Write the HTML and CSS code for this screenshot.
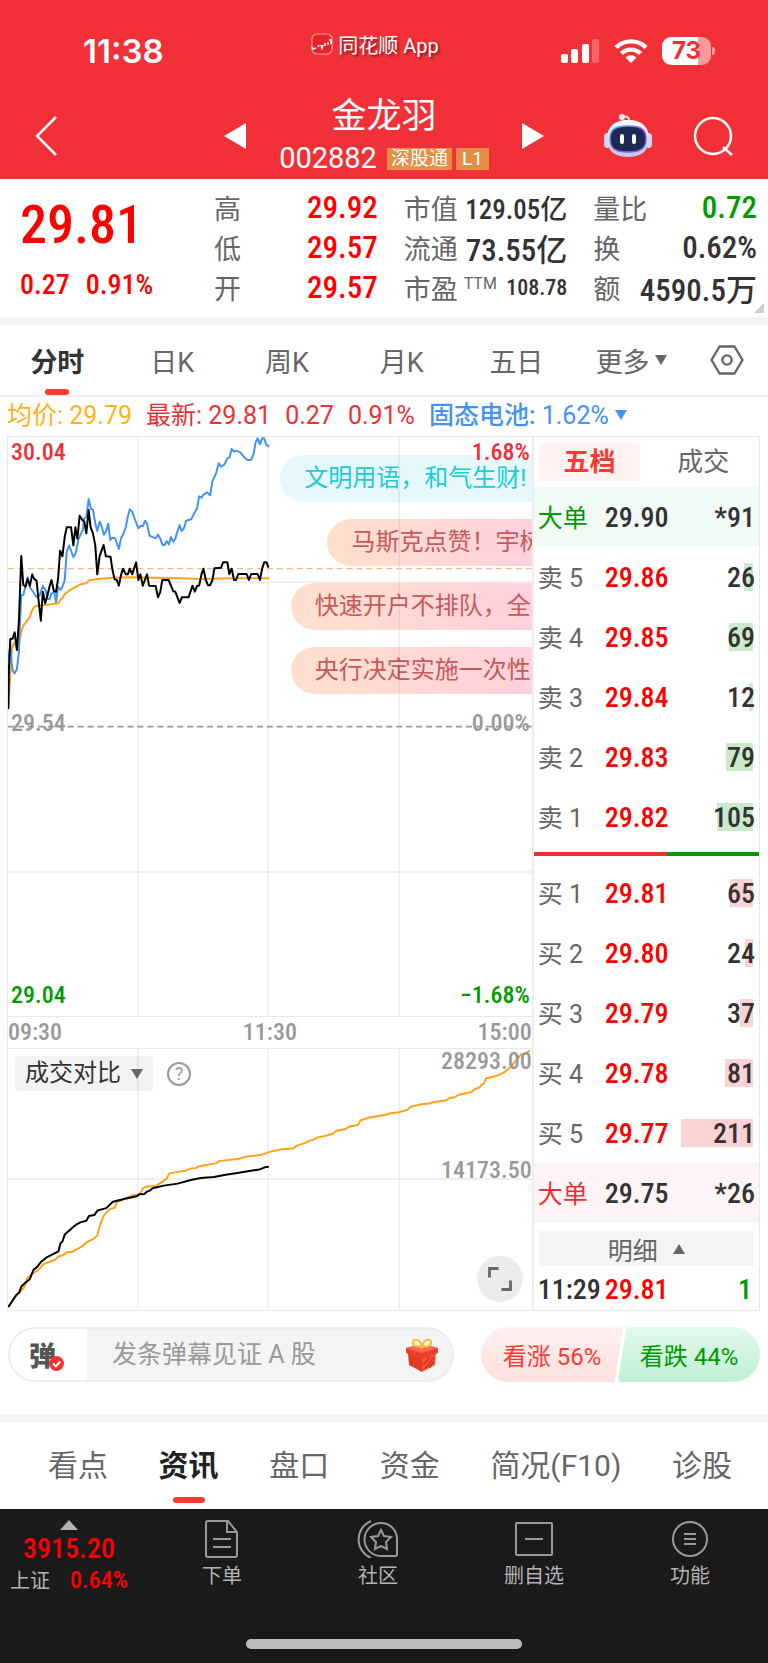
FILE: index.html
```
<!DOCTYPE html>
<html lang="zh-CN">
  <head>
    <meta charset="UTF-8" />
    <meta name="viewport" content="width=device-width, initial-scale=1.0" />
    <title>金龙羽 002882</title>
    <link rel="stylesheet" href="styles.css">
  </head>
  <body>
    <header class="header">
      <div class="status-bar">
        <span class="time">11:38</span>
        <span class="app-name">
          <svg width="22" height="22" viewBox="0 0 22 22">
            <rect x="1" y="1" width="20" height="20" rx="5" fill="#e8232b" stroke="#f99" stroke-width="1.2" />
            <path d="M1 14l1 2 3-1M7 14l1-2M10 12l1 3 1-3M14 13v-3M17 9v3M18 7h2v4" fill="none" stroke="#fff" stroke-width="1.6" />
          </svg>
          同花顺 App
        </span>
        <span class="status-icons">
          <svg width="39" height="26" viewBox="0 0 39 26">
            <g fill="#fff">
              <rect x="0" y="16" width="7" height="9" rx="2" />
              <rect x="10" y="11" width="7" height="14" rx="2" />
              <rect x="21" y="6" width="7" height="19" rx="2" />
              <rect x="31" y="1" width="7" height="24" rx="2" opacity=".25" />
            </g>
          </svg>
          <svg width="34" height="26" viewBox="0 0 34 26">
            <g fill="none" stroke="#fff" stroke-width="4.4">
              <path d="M2 9.500a21.500 21.500 0 0 1 30 0" />
              <path d="M7.500 15.500a13.500 13.500 0 0 1 19 0" />
            </g>
            <path d="M17 25l-5.500-5.600a7.800 7.800 0 0 1 11 0z" fill="#fff" />
          </svg>
          <span class="battery">73</span>
        </span>
      </div>

      <nav class="title-bar">
        <button class="icon-button" aria-label="返回">
          <svg width="24" height="40" viewBox="0 0 24 40">
            <path d="M21 1L2 20l19 19" fill="none" stroke="#fff" stroke-width="2.500" />
          </svg>
        </button>
        <div class="stock-switch">
          <button class="icon-button" aria-label="上一只">
            <svg width="22" height="26" viewBox="0 0 22 26"><path d="M22 0v26L0 13z" fill="#fff" /></svg>
          </button>
          <div class="stock-title">
            <h1>金龙羽</h1>
            <p>002882 <span class="tag">深股通</span><span class="tag">L1</span></p>
          </div>
          <button class="icon-button" aria-label="下一只">
            <svg width="22" height="26" viewBox="0 0 22 26"><path d="M0 0v26l22-13z" fill="#fff" /></svg>
          </button>
        </div>
        <div class="title-actions">
          <button class="icon-button" aria-label="智能助手">
            <svg width="48" height="46" viewBox="0 0 48 46">
              <defs>
                <linearGradient id="shell" x1="0" y1="0" x2="0" y2="1">
                  <stop offset="0" stop-color="#fff" />
                  <stop offset="1" stop-color="#c3c6e6" />
                </linearGradient>
                <linearGradient id="rim" x1="0" y1="0" x2="1" y2="1">
                  <stop offset="0" stop-color="#45c8e8" />
                  <stop offset=".5" stop-color="#a04be8" />
                  <stop offset="1" stop-color="#5a6cf0" />
                </linearGradient>
              </defs>
              <path d="M18 4q8-2 7 5" fill="none" stroke="#dcdcf2" stroke-width="2" />
              <circle cx="18" cy="4" r="3" fill="#e9e9f8" />
              <rect x="0" y="20" width="7" height="15" rx="3.500" fill="#cfd2ee" />
              <rect x="41" y="20" width="7" height="15" rx="3.500" fill="#cfd2ee" />
              <path d="M24 7c15 0 21 8 21 19S38 44 24 44 3 37 3 26 9 7 24 7z" fill="url(#shell)" />
              <path d="M24 13c14 0 18 4 18 13s-5 13-18 13S6 35 6 26s4-13 18-13z" fill="#1d2950" stroke="url(#rim)" stroke-width="1.500" />
              <rect x="16" y="21" width="4" height="10" rx="2" fill="#fff" />
              <rect x="28" y="21" width="4" height="10" rx="2" fill="#fff" />
            </svg>
          </button>
          <button class="icon-button" aria-label="搜索">
            <svg width="40" height="40" viewBox="0 0 40 40">
              <g fill="none" stroke="#fff" stroke-width="2.500">
                <circle cx="20" cy="20" r="18" />
                <path d="M30 31l9 8" />
              </g>
            </svg>
          </button>
        </div>
      </nav>
    </header>

    <section class="quote">
      <div class="quote-price">
        <div class="price">29.81</div>
        <div class="change"><span>0.27</span><span>0.91%</span></div>
      </div>
      <dl>
        <div><dt>高</dt><dd class="up">29.92</dd></div>
        <div><dt>低</dt><dd class="up">29.57</dd></div>
        <div><dt>开</dt><dd class="up">29.57</dd></div>
      </dl>
      <dl>
        <div><dt>市值</dt><dd class="medium">129.05亿</dd></div>
        <div><dt>流通</dt><dd>73.55亿</dd></div>
        <div><dt>市盈<sup>TTM</sup></dt><dd class="small">108.78</dd></div>
      </dl>
      <dl>
        <div><dt>量比</dt><dd class="down">0.72</dd></div>
        <div><dt>换</dt><dd>0.62%</dd></div>
        <div><dt>额</dt><dd>4590.5万</dd></div>
      </dl>
      <span class="corner"></span>
    </section>

    <nav class="period-tabs">
      <button class="active">分时</button>
      <button>日K</button>
      <button>周K</button>
      <button>月K</button>
      <button>五日</button>
      <button>更多<span class="caret"></span></button>
      <button aria-label="设置">
        <svg width="34" height="30" viewBox="0 0 34 30">
          <g fill="none" stroke="#666" stroke-width="2.400">
            <path d="M9.500 1.500h15L32.500 15l-8 13.500h-15L1.500 15z" stroke-linejoin="round" />
            <circle cx="17" cy="15" r="4.600" />
          </g>
        </svg>
      </button>
    </nav>

    <div class="info-line">
      <span class="avg">均价: 29.79</span>
      <span class="latest">最新: 29.81</span>
      <span class="latest">0.27</span>
      <span class="latest">0.91%</span>
      <button class="sector"><b>固态电池:</b> 1.62% <span class="caret"></span></button>
    </div>

    <main class="board">
      <div class="charts">
        <div class="price-chart">
          <div class="barrage">
            <span class="notice">文明用语，和气生财!</span>
            <span class="msg-a">马斯克点赞！宇树</span>
            <span class="msg-b">快速开户不排队，全流程</span>
            <span class="msg-b">央行决定实施一次性信用</span>
          </div>
          <svg viewBox="0 0 1578 1740" preserveAspectRatio="none">
            <g transform="translate(-24 -51)" fill="none" stroke-linejoin="round">
              <path d="M415 51V1791M808 51V1791M1203 51V1791M24 486H1602M24 1356H1602" stroke="#000" stroke-opacity=".08" stroke-width="4" />
              <path d="M24 446H1602" stroke="#e3bf8c" stroke-width="4" stroke-dasharray="18 12" />
              <path d="M24 920H1602" stroke="#999" stroke-width="5" stroke-dasharray="18 12" />
              <path stroke="#ffa31a" stroke-width="6" d="M25 865L30 780 36 685 42 668 50 680 58 670 63 640 70 617 80 604 90 590 96 572 103 561 112 557 130 556 155 553 176 550 183 538 188 535 195 522 210 511 225 502 243 493 260 490 268 481 295 477 340 473 400 472 460 473 530 474 600 477 700 475 811 475" />
              <path stroke="#4493f0" stroke-width="6" d="M25 720L31 675 34 720 38 752 44 760 51 747 57 695 60 610 64 525 70 525 77 498 83 472 90 502 98 513 110 531 119 527 129 498 138 512 142 535 149 538 155 520 164 518 169 547 175 500 182 510 188 500 195 480 201 395 208 377 214 392 221 411 228 400 236 360 243 342 250 330 253 297 260 290 267 237 274 267 280 269 287 310 293 333 300 305 306 318 313 344 319 335 326 311 332 360 338 353 347 355 358 387 365 353 372 341 379 321 385 290 391 268 398 275 406 297 417 325 424 317 431 318 437 302 443 311 450 346 456 350 469 355 476 344 483 356 489 374 496 375 502 363 509 373 515 351 522 365 528 357 535 333 541 315 547 333 554 325 561 302 576 298 586 278 594 264 600 229 607 233 613 224 624 217 633 226 640 184 652 157 659 130 666 140 676 134 685 115 691 113 698 87 705 95 711 92 724 97 737 113 746 120 757 119 764 102 770 68 776 55 783 73 790 55 796 55 802 74 811 80" />
              <path stroke="#000" stroke-width="6" d="M25 867L27 740 31 657 38 656 44 637 51 690 57 600 64 408 70 495 77 500 83 477 90 497 97 463 103 477 110 482 116 540 123 602 129 515 136 550 142 530 149 500 155 480 162 513 169 515 175 475 181 392 188 409 195 350 201 322 214 322 221 376 227 322 233 356 240 287 248 300 254 305 260 340 267 270 273 322 280 340 287 376 293 463 300 409 306 392 312 375 319 409 333 410 338 445 345 478 352 480 358 497 365 463 371 446 379 463 385 463 391 446 398 463 404 445 410 427 417 480 423 463 430 497 443 463 449 497 469 498 476 532 483 515 489 480 508 480 515 497 522 514 528 515 541 549 548 532 568 532 580 497 587 515 594 497 600 497 607 463 613 446 620 480 627 496 633 496 640 480 646 445 666 443 672 427 685 427 691 462 698 446 705 480 711 480 718 462 743 462 750 480 757 462 776 462 783 480 790 445 796 427 803 427 809 443" />
            </g>
          </svg>
          <span class="label top-left up-text">30.04</span>
          <span class="label top-right up-text">1.68%</span>
          <span class="label mid-left">29.54</span>
          <span class="label mid-right">0.00%</span>
          <span class="label bottom-left down">29.04</span>
          <span class="label bottom-right down">−1.68%</span>
        </div>
        <div class="time-axis"><span>09:30</span><span>11:30</span><span>15:00</span></div>
        <div class="volume-chart">
          <svg viewBox="0 0 1578 786" preserveAspectRatio="none">
            <g transform="translate(-24 -265)" fill="none" stroke-linejoin="round">
              <path d="M415 265V1051M808 265V1051M1203 265V1051M24 658H1602" stroke="#000" stroke-opacity=".08" stroke-width="4" />
              <path stroke="#ffa31a" stroke-width="6" d="M25 1045L45 1015 72 987 82 957 98 943 115 934 130 916 165 902 175 893 188 889 200 880 217 878 250 860 260 850 282 839 293 829 302 795 313 768 330 750 346 744 352 728 380 716 400 707 422 704 430 687 440 681 470 679 485 669 502 657 510 641 562 632 575 626 590 625 598 620 652 610 660 604 720 597 740 591 788 585 812 576 850 568 882 566 895 557 922 548 930 543 945 539 955 533 978 528 1003 521 1014 512 1042 507 1053 499 1078 495 1086 481 1110 473 1163 464 1173 460 1203 456 1227 449 1237 440 1270 432 1295 430 1303 426 1345 420 1355 413 1370 411 1380 404 1420 395 1432 386 1445 381 1450 374 1458 370 1464 354 1500 345 1520 335 1540 318 1560 292 1572 280 1582 280 1596 269" />
              <path stroke="#000" stroke-width="6" d="M25 1045L50 1007 57 1002 65 982 73 975 90 960 101 932 110 926 123 909 142 894 176 877 182 852 188 847 195 826 212 811 228 797 242 789 260 784 268 770 284 767 294 753 320 746 340 727 380 717 412 710 420 704 435 703 443 696 450 694 460 686 493 678 535 672 575 661 605 655 645 652 680 645 720 639 760 632 782 629 800 622 810 621" />
            </g>
          </svg>
          <div class="volume-tools">
            <button class="select-button">成交对比<span class="caret"></span></button>
            <button class="help" aria-label="说明">?</button>
          </div>
          <span class="label volume-max">28293.00</span>
          <span class="label volume-mid">14173.50</span>
          <button class="expand" aria-label="全屏">
            <svg width="24" height="24" viewBox="0 0 24 24">
              <path d="M1.500 10.500v-9h9M22.500 13.500v9h-9" fill="none" stroke="#666" stroke-width="2.800" />
            </svg>
          </button>
        </div>
      </div>

      <div class="order-book">
        <div class="book-tabs">
          <button class="active">五档</button>
          <button>成交</button>
        </div>
        <table>
          <tr class="big-sell"><th>大单</th><td>29.90</td><td>*91</td></tr>
          <tr class="sell"><th>卖 5</th><td>29.86</td><td><i style="width: 9px"></i>26</td></tr>
          <tr class="sell"><th>卖 4</th><td>29.85</td><td><i style="width: 24px"></i>69</td></tr>
          <tr class="sell"><th>卖 3</th><td>29.84</td><td><i style="width: 4px"></i>12</td></tr>
          <tr class="sell"><th>卖 2</th><td>29.83</td><td><i style="width: 27px"></i>79</td></tr>
          <tr class="sell"><th>卖 1</th><td>29.82</td><td><i style="width: 36px"></i>105</td></tr>
        </table>
        <div class="ratio"><span style="width: 59%"></span></div>
        <table>
          <tr class="buy"><th>买 1</th><td>29.81</td><td><i style="width: 23px"></i>65</td></tr>
          <tr class="buy"><th>买 2</th><td>29.80</td><td><i style="width: 8px"></i>24</td></tr>
          <tr class="buy"><th>买 3</th><td>29.79</td><td><i style="width: 13px"></i>37</td></tr>
          <tr class="buy"><th>买 4</th><td>29.78</td><td><i style="width: 28px"></i>81</td></tr>
          <tr class="buy"><th>买 5</th><td>29.77</td><td><i style="width: 72px"></i>211</td></tr>
          <tr class="big-buy"><th>大单</th><td>29.75</td><td>*26</td></tr>
        </table>
        <button class="detail-button">明细<span class="caret-up"></span></button>
        <div class="trade"><span>11:29</span><span class="up">29.81</span><span class="down">1</span></div>
      </div>
    </main>

    <section class="barrage-bar">
      <div class="barrage-input">
        <button class="barrage-toggle" aria-label="弹幕开关">
          弹
          <svg width="15" height="15" viewBox="0 0 15 15">
            <circle cx="7.500" cy="7.500" r="7.500" fill="#f5352f" />
            <path d="M4 7.500l2.800 2.800 4.400-4.600" fill="none" stroke="#fff" stroke-width="2" />
          </svg>
        </button>
        <input type="text" placeholder="发条弹幕见证 A 股" aria-label="发弹幕" />
        <button class="gift" aria-label="礼物">
          <svg width="32" height="34" viewBox="0 0 32 34">
            <path d="M2 15l14 5v14L3 27z" fill="#e33a24" />
            <path d="M30 15l-14 5v14l13-7z" fill="#f2573c" />
            <path d="M0 10L16 6l16 4v5l-16 6L0 15z" fill="#e8402a" />
            <path d="M0 10L16 6l16 4-16 5z" fill="#f86a4c" />
            <path d="M19 31l9-12M17 27l7-8M23 30l5-7" stroke="#d8301c" stroke-width="1.500" />
            <path d="M16 8C11 9 6 8 7 4s7-3 9 4c2-7 8-8 9-4s-4 5-9 4z" fill="#fff3d6" stroke="#f8b93e" stroke-width="2" />
            <path d="M14 6h4v4h-4z" fill="#f8b93e" />
          </svg>
        </button>
      </div>
      <div class="vote">
        <button class="vote-up">看涨 56%</button>
        <button class="vote-down">看跌 44%</button>
      </div>
    </section>

    <nav class="section-tabs">
      <a href="#">看点</a>
      <a href="#" class="active">资讯</a>
      <a href="#">盘口</a>
      <a href="#">资金</a>
      <a href="#">简况(F10)</a>
      <a href="#">诊股</a>
    </nav>

    <footer class="bottom-bar">
      <div class="bottom-items">
        <a href="#" class="index">
          <span class="caret-up"></span>
          <strong>3915.20</strong>
          <span class="index-change">上证<em>0.64%</em></span>
        </a>
        <a href="#">
          <svg width="36" height="38" viewBox="0 0 36 38">
            <g fill="none" stroke="#999" stroke-width="2">
              <path d="M4 1h20l9 11v23q0 2-2 2H4q-2 0-2-2V3q0-2 2-2zM23 1v11h10" />
              <path d="M9 19h18M9 27h18" />
            </g>
          </svg>
          下单
        </a>
        <a href="#">
          <svg width="42" height="38" viewBox="0 0 42 38">
            <g fill="none" stroke="#999" stroke-width="2">
              <path d="M24 3a16 16 0 0 0 0 33h14q2 0 2-2V19A16 16 0 0 0 24 3z" />
              <path d="M14 1a20 20 0 0 0 0 37" />
              <path d="M24 10l3 6 7 1-5 5 1 7-6-3-6 3 1-7-5-5 7-1z" />
            </g>
          </svg>
          社区
        </a>
        <a href="#">
          <svg width="40" height="38" viewBox="0 0 40 38">
            <g fill="none" stroke="#999" stroke-width="2">
              <rect x="2" y="3" width="36" height="32" rx="1" />
              <path d="M11 19h18" />
            </g>
          </svg>
          删自选
        </a>
        <a href="#">
          <svg width="38" height="38" viewBox="0 0 38 38">
            <g fill="none" stroke="#999" stroke-width="2">
              <circle cx="19" cy="19" r="17" />
              <path d="M13 14h12M13 19h12M13 24h12" />
            </g>
          </svg>
          功能
        </a>
      </div>
      <div class="home-indicator"></div>
    </footer>
  </body>
</html>
```
FILE: styles.css
```
* {
  margin: 0;
  padding: 0;
  box-sizing: border-box;
}

:root {
  --digits: "Roboto Condensed", Roboto, "Noto Sans CJK SC", sans-serif;
}

body {
  background: #fff;
  color: #333;
  font-family: Roboto, "Noto Sans CJK SC", sans-serif;
  font-size: 24px;
}

button,
input {
  border: none;
  background: none;
  color: inherit;
  font: inherit;
}

a {
  color: inherit;
  text-decoration: none;
}

svg {
  display: block;
}

.up {
  color: #fe0000;
}

.up-text {
  color: #ee2f35;
}

.down {
  color: #090;
}

.caret,
.caret-up {
  display: inline-block;
  border: 6px solid transparent;
  border-top: 10px solid currentColor;
  border-bottom: none;
}

.caret-up {
  border-top: none;
  border-bottom: 10px solid currentColor;
}

/* header */
.header {
  background: #f23037;
  color: #fff;
  padding-bottom: 2px;
}

.status-bar {
  display: grid;
  grid-template-columns: 1fr auto 1fr;
  align-items: center;
  height: 94px;
  padding: 8px 57px 0;
}

.time {
  margin-left: 26px;
  font-family: Inter, sans-serif;
  font-size: 33px;
  font-weight: 600;
}

.app-name {
  display: flex;
  align-items: center;
  gap: 5px;
  padding: 0 18px 14px 0;
  font-size: 20px;
  text-shadow: 2px 2px 2px rgba(0, 0, 0, 0.4);
}

.status-icons {
  display: flex;
  justify-content: flex-end;
  align-items: center;
  gap: 14px;
}

.battery {
  position: relative;
  width: 49px;
  border-radius: 9px;
  background: linear-gradient(90deg, #fff 73%, #f99a9d 73%);
  color: #f23037;
  font-family: Inter, sans-serif;
  font-size: 24px;
  font-weight: 700;
  line-height: 28px;
  text-align: center;
}

.battery::after {
  content: "";
  position: absolute;
  top: 10px;
  right: -4px;
  width: 3px;
  height: 8px;
  border-radius: 0 4px 4px 0;
  background: #f99a9d;
}

.title-bar {
  display: grid;
  grid-template-columns: 1fr 320px 1fr;
  align-items: center;
  padding: 0 35px;
}

.icon-button {
  display: flex;
}

.stock-switch {
  display: flex;
  align-items: center;
  justify-content: space-between;
}

.stock-title {
  text-align: center;
}

.stock-title h1 {
  font-size: 35px;
  font-weight: 400;
  line-height: 46px;
}

.stock-title p {
  display: flex;
  align-items: center;
  gap: 4px;
  font-size: 29px;
  line-height: 37px;
}

.tag {
  padding: 0 4px;
  background: #e58c47;
  font-size: 19px;
  line-height: 22px;
}

.tag:first-child {
  margin-left: 6px;
}

.tag:last-child {
  padding: 0 6px;
}

.title-actions {
  display: flex;
  align-items: center;
  justify-content: flex-end;
  gap: 41px;
}

/* quote */
.quote {
  position: relative;
  display: grid;
  grid-template-columns: 168px 1fr 1fr 1fr;
  gap: 26px;
  padding: 8px 11px 10px 20px;
  border-bottom: 8px solid #f4f4f4;
}

.price {
  color: #fe0000;
  font-family: var(--digits);
  font-size: 54px;
  font-weight: 500;
  line-height: 76px;
}

.change {
  display: flex;
  gap: 16px;
  color: #fe0000;
  font-family: var(--digits);
  font-size: 28px;
  font-weight: 500;
  line-height: 44px;
}

.quote dl div {
  display: flex;
  align-items: center;
  justify-content: space-between;
  height: 40px;
  white-space: nowrap;
}

.quote dt {
  color: #666;
  font-size: 27px;
}

.quote dt sup {
  margin-left: 6px;
  font-size: 16px;
}

.quote dd {
  font-family: var(--digits);
  font-size: 31px;
  font-weight: 500;
}

.quote .medium {
  font-size: 27px;
}

.quote .small {
  font-size: 22px;
}

.corner {
  position: absolute;
  right: 4px;
  bottom: 4px;
  border-left: 10px solid transparent;
  border-bottom: 10px solid #ccc;
}

/* period tabs */
.period-tabs {
  display: grid;
  grid-template-columns: repeat(6, 3fr) 2fr;
  height: 72px;
  padding-right: 3px;
  border-bottom: 2px solid #eee;
  color: #666;
  font-size: 27px;
}

.period-tabs button {
  position: relative;
  display: flex;
  align-items: center;
  justify-content: center;
  gap: 5px;
}

.period-tabs .active {
  color: #333;
  font-weight: 700;
}

.period-tabs .active::after,
.section-tabs .active::after {
  content: "";
  position: absolute;
  bottom: 0;
  left: 50%;
  transform: translateX(-50%);
  width: 24px;
  height: 6px;
  border-radius: 3px;
  background: #fb3b33;
}

.info-line {
  display: flex;
  align-items: baseline;
  gap: 14px;
  height: 39px;
  padding: 0 7px;
  font-size: 25px;
  line-height: 38px;
  white-space: nowrap;
}

.avg {
  color: #ffb319;
}

.latest {
  color: #ee2f35;
}

.sector {
  color: #4493f0;
}

.sector b {
  font-weight: 500;
}

.sector .caret {
  vertical-align: 4px;
}

/* charts */
.board {
  display: grid;
  grid-template-columns: 7fr 3fr;
  margin: 0 8px 0 7px;
  border: 1px solid #e8e8e8;
}

.charts {
  position: relative;
  min-width: 0;
  border-right: 2px solid #eee;
}

.charts > div > svg {
  width: 100%;
}

.price-chart {
  position: relative;
  height: 580px;
  border-bottom: 1px solid #e8e8e8;
}

.price-chart > svg {
  position: relative;
  height: 580px;
}

.barrage {
  position: absolute;
  top: 18px;
  right: 0;
  left: 0;
  display: flex;
  flex-direction: column;
  gap: 17px;
  overflow: hidden;
  color: #c45a5a;
  font-size: 24px;
  line-height: 47px;
  white-space: nowrap;
}

.barrage span {
  padding-left: 24px;
  border-radius: 24px 0 0 24px;
  background: linear-gradient(90deg, #ffe0cc, #ffd1dc);
}

.barrage .notice {
  margin-left: 52%;
  background: #e6f8fc;
  color: #18ccd8;
}

.barrage .msg-a {
  margin-left: 61%;
}

.barrage .msg-b {
  margin-left: 54%;
}

.label {
  position: absolute;
  color: #999;
  font-family: var(--digits);
  font-size: 24px;
  font-weight: 500;
  line-height: 26px;
}

.label.up-text {
  color: #ee2f35;
}

.label.down {
  color: #090;
}

.top-left,
.top-right {
  top: 2px;
}

.mid-left,
.mid-right {
  top: 273px;
}

.bottom-left,
.bottom-right {
  bottom: 8px;
}

.top-left,
.mid-left,
.bottom-left {
  left: 3px;
}

.top-right,
.mid-right,
.bottom-right {
  right: 2px;
}

.time-axis {
  display: flex;
  justify-content: space-between;
  color: #999;
  font-family: var(--digits);
  font-size: 24px;
  font-weight: 500;
  line-height: 31px;
}

.volume-chart {
  position: relative;
  height: 261px;
  border-top: 1px solid #e8e8e8;
}

.volume-chart > svg {
  height: 260px;
}

.volume-tools {
  position: absolute;
  top: 7px;
  left: 7px;
  display: flex;
  align-items: center;
  gap: 14px;
}

.select-button {
  display: flex;
  align-items: center;
  gap: 10px;
  height: 35px;
  padding: 0 10px;
  border-radius: 4px;
  background: rgba(0, 0, 0, 0.05);
  font-size: 24px;
  line-height: 35px;
}

.select-button .caret,
.detail-button .caret-up {
  color: #666;
}

.help {
  width: 24px;
  height: 24px;
  border: 2px solid #999;
  border-radius: 50%;
  color: #999;
  font-size: 18px;
  line-height: 20px;
}

.volume-max {
  top: -1px;
  right: 0;
}

.volume-mid {
  top: 108px;
  right: 0;
}

.expand {
  position: absolute;
  right: 9px;
  bottom: 7px;
  display: flex;
  align-items: center;
  justify-content: center;
  width: 46px;
  height: 46px;
  border-radius: 50%;
  background: #ebebeb;
}

/* order book */
.book-tabs {
  display: grid;
  grid-template-columns: 1fr 1fr;
  gap: 12px;
  padding: 6px 5px;
  color: #666;
  font-size: 26px;
  line-height: 38px;
}

.book-tabs .active {
  border-radius: 4px;
  background: #fff2f1;
  color: #fb3b33;
  font-weight: 700;
}

.order-book table {
  width: 100%;
  border-collapse: collapse;
  table-layout: fixed;
}

.order-book th,
.order-book td {
  position: relative;
  height: 60px;
  text-align: left;
  white-space: nowrap;
}

.order-book td {
  font-family: var(--digits);
  font-size: 28px;
  font-weight: 500;
}

.order-book th {
  width: 71px;
  padding: 0 0 3px 4px;
  color: #666;
  font-size: 25px;
  font-weight: 400;
}

.order-book td:last-child {
  z-index: 0;
  padding-right: 4px;
  text-align: right;
}

.order-book td i {
  position: absolute;
  z-index: -1;
  top: 16px;
  right: 6px;
  height: 28px;
  background: #cbeacb;
}

.order-book .buy i {
  background: #fbd3d5;
}

.sell td:nth-child(2),
.buy td:nth-child(2) {
  color: #fe0000;
}

.big-sell {
  background: #f2faf6;
}

.big-buy {
  background: #fdf5f5;
}

.order-book .big-sell th {
  color: #090;
}

.order-book .big-buy th {
  color: #ee2f35;
}

.ratio {
  height: 4px;
  margin: 5px 0 7px;
  background: #090;
}

.ratio span {
  display: block;
  height: 4px;
  background: #ee2f35;
}

.detail-button {
  display: flex;
  align-items: center;
  justify-content: center;
  gap: 15px;
  width: calc(100% - 10px);
  height: 35px;
  margin: 8px 5px 4px;
  background: #f4f4f4;
  color: #666;
  font-size: 25px;
}

.trade {
  display: grid;
  grid-template-columns: 67px 1fr auto;
  padding: 0 7px 0 4px;
  font-family: var(--digits);
  font-size: 28px;
  font-weight: 500;
  line-height: 40px;
}

/* barrage input */
.barrage-bar {
  display: flex;
  align-items: center;
  justify-content: space-between;
  gap: 27px;
  padding: 16px 8px 32px;
  border-bottom: 8px solid #f4f4f4;
}

.barrage-input {
  flex: 1;
  display: flex;
  height: 55px;
  border: 2px solid #ededed;
  border-radius: 28px;
  background: #f4f4f4;
  overflow: hidden;
}

.barrage-toggle {
  position: relative;
  width: 77px;
  background: #fff;
  color: #555;
  font-size: 27px;
  font-weight: 900;
  text-align: left;
  padding-left: 19px;
}

.barrage-toggle svg {
  position: absolute;
  top: 27px;
  left: 39px;
}

.barrage-input input {
  flex: 1;
  min-width: 0;
  padding-left: 25px;
  font-size: 25px;
}

.barrage-input input::placeholder {
  color: #999;
}

.gift {
  padding: 0 14px;
}

.vote {
  display: flex;
  font-size: 24px;
}

.vote button {
  width: 142px;
  height: 55px;
}

.vote-up {
  border-radius: 28px 4px 4px 28px;
  background: linear-gradient(#fff0ef, #fde0de);
  clip-path: polygon(0 0, 100% 0, 94% 100%, 0 100%);
  color: #fb3b33;
}

.vote .vote-down {
  margin-left: -5px;
  border-radius: 4px 28px 28px 4px;
  background: linear-gradient(#e2faec, #bfefd4);
  clip-path: polygon(6% 0, 100% 0, 100% 100%, 0 100%);
  color: #090;
}

/* section tabs */
.section-tabs {
  display: flex;
  justify-content: space-between;
  padding: 0 36px 0 48px;
  color: #666;
  font-size: 30px;
  line-height: 87px;
}

.section-tabs a {
  position: relative;
}

.section-tabs .active {
  color: #222;
  font-weight: 700;
}

.section-tabs .active::after {
  bottom: 6px;
  width: 32px;
}

/* bottom bar */
.bottom-bar {
  padding: 9px 0 17px;
  background: #1a1a1a;
  color: #b3b3b3;
}

.bottom-items {
  display: grid;
  grid-template-columns: 144px repeat(4, 1fr);
  font-size: 20px;
}

.bottom-items a {
  display: flex;
  flex-direction: column;
  align-items: center;
  gap: 3px;
  padding-top: 2px;
  line-height: 30px;
}

.bottom-items .index {
  gap: 0;
  padding-right: 6px;
}

.index strong {
  color: #fe0000;
  font-family: var(--digits);
  font-size: 28px;
  font-weight: 500;
  line-height: 38px;
}

.index .caret-up {
  border-right-width: 9px;
  border-left-width: 9px;
}

.index-change {
  line-height: 24px;
}

.index-change em {
  margin-left: 20px;
  color: #fe0000;
  font-family: var(--digits);
  font-size: 24px;
  font-style: normal;
  font-weight: 500;
}

.home-indicator {
  width: 36%;
  height: 10px;
  margin: 46px auto 0;
  border-radius: 5px;
  background: #bbb;
}
```
